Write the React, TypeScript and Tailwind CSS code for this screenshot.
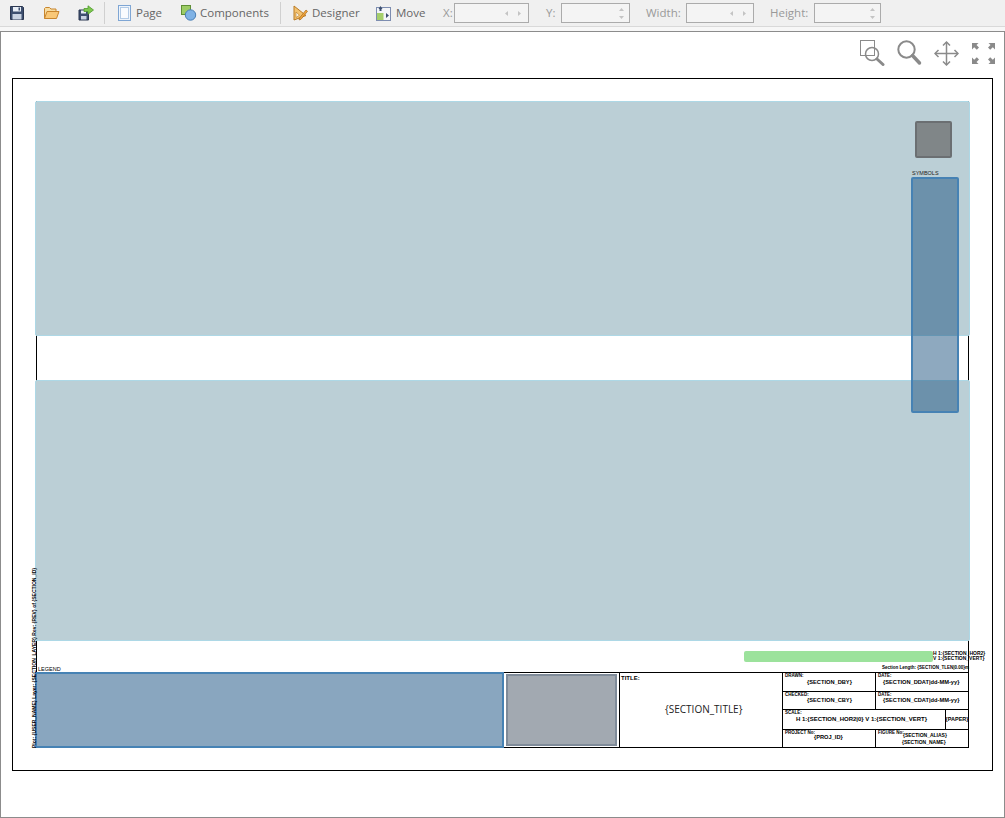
import React from 'react';

const uiFont = "font-['Open_Sans','Noto_Sans',sans-serif]";
const tinyFont = "font-['Liberation_Sans',sans-serif]";
const cornerPath = 'M1 1h6.500L5.500 3l2.500 2.500L5.800 7.800 3.200 5.200 1 7.500z';

function SaveIcon() {
  return (
    <svg width="16" height="16" viewBox="0 0 16 16">
      <path d="M1.500 1.500h12l1 1v12H1.500z" fill="#3d4f6f" stroke="#2a3650" />
      <rect x="4" y="2" width="8" height="4.500" fill="#e8eef6" />
      <rect x="9.500" y="2.500" width="1.500" height="3" fill="#3d4f6f" />
      <rect x="3.500" y="9" width="9" height="5.500" fill="#c9d3e2" />
    </svg>
  );
}

function OpenIcon() {
  return (
    <svg width="17" height="16" viewBox="0 0 17 16">
      <path d="M1.500 13.500v-10l1-1h4L8 4h5v2" fill="#f7dca0" stroke="#c8852e" />
      <path d="M1.500 13.500L4 6.500h12l-2.500 7z" fill="#f9c878" stroke="#c8852e" />
    </svg>
  );
}

function SaveAsIcon() {
  return (
    <svg width="16" height="16" viewBox="0 0 16 16">
      <path d="M1 5h8.500l1 1v9H1z" fill="#3d4f6f" stroke="#2a3650" />
      <rect x="3" y="5.500" width="5" height="3" fill="#e8eef6" />
      <rect x="3" y="11" width="5.500" height="3.500" fill="#c9d3e2" />
      <path d="M6 5V3.500h4V0.800L15.500 5 10 9.200V6.500H6z" fill="#7ec850" stroke="#4f9a2c" strokeWidth="0.800" />
    </svg>
  );
}

function PageIcon() {
  return (
    <svg width="14" height="16" viewBox="0 0 14 16">
      <rect x="0.500" y="0.500" width="12" height="15" fill="#eef4fb" stroke="#7fa6d4" />
      <rect x="2.500" y="2.500" width="8" height="11" fill="#f9fbfe" stroke="#b3cbe6" />
    </svg>
  );
}

function ComponentsIcon() {
  return (
    <svg width="16" height="16" viewBox="0 0 16 16">
      <rect x="0.500" y="0.500" width="9" height="9" fill="#9ccc65" stroke="#5f8f35" />
      <circle cx="9.500" cy="10" r="5.200" fill="#7fb2e5" stroke="#4a7fb5" />
    </svg>
  );
}

function DesignerIcon() {
  return (
    <svg width="15" height="16" viewBox="0 0 15 16">
      <path d="M1 1l12 9.500L1 15z" fill="#f3c26f" stroke="#b97a24" />
      <path d="M3 7l3.400 3.200L3 12.500z" fill="#f7f2e6" stroke="#b97a24" strokeWidth="0.600" />
      <path d="M6.500 13L13 5l1.500 1.300-6.500 8-2 .6z" fill="#f0a63c" stroke="#a9681b" strokeWidth="0.700" />
    </svg>
  );
}

function MoveIcon() {
  return (
    <svg width="15" height="16" viewBox="0 0 15 16">
      <rect x="0.500" y="2.500" width="14" height="13" fill="#f3f5f8" stroke="#7d8db0" />
      <rect x="1" y="8" width="6.500" height="7" fill="#a5cf6b" />
      <path d="M4.500 1l2 3h-4z" fill="#3d4f6f" />
      <path d="M10 8l3 2.500-3 2.500z" fill="#3d4f6f" />
      <rect x="3.500" y="4" width="2" height="2" fill="#3d4f6f" />
    </svg>
  );
}

function Sep({ className }: { className: string }) {
  return <div className={`h-[22px] w-px bg-[#d0d0d0] ${className}`} />;
}

function ToolButton({ icon, label, className, labelClass }: { icon: React.ReactNode; label: string; className: string; labelClass: string }) {
  return (
    <div className={`flex items-center ${className}`}>
      {icon}
      <span className={`whitespace-nowrap text-[11.5px] leading-none text-[#666] ${labelClass}`}>{label}</span>
    </div>
  );
}

function Arrows({ kind }: { kind: 'h' | 'v' }) {
  if (kind === 'h') {
    return (
      <div className="flex items-center gap-[10px] pr-[7px]">
        <svg width="3" height="5" viewBox="0 0 3 5"><path d="M3 0v5L0 2.500z" fill="#c4c4c4" /></svg>
        <svg width="3" height="5" viewBox="0 0 3 5"><path d="M0 0v5l3-2.500z" fill="#c4c4c4" /></svg>
      </div>
    );
  }
  return (
    <div className="flex flex-col items-center gap-[5px] pr-[5px]">
      <svg width="5" height="3" viewBox="0 0 5 3"><path d="M0 3h5L2.500 0z" fill="#c4c4c4" /></svg>
      <svg width="5" height="3" viewBox="0 0 5 3"><path d="M0 0h5L2.500 3z" fill="#c4c4c4" /></svg>
    </div>
  );
}

function Field({ label, kind, boxClass, labelClass }: { label: string; kind: 'h' | 'v'; boxClass: string; labelClass: string }) {
  return (
    <div className="flex items-center">
      <span className={`whitespace-nowrap text-[11.5px] leading-none text-[#999] ${labelClass}`}>{label}</span>
      <div className={`flex h-[20px] items-center justify-end border border-[#ababab] bg-[#f4f4f4] ${boxClass}`}>
        <Arrows kind={kind} />
      </div>
    </div>
  );
}

function Toolbar() {
  return (
    <div className={`flex h-[27px] shrink-0 items-center border-b border-[#d9d9d9] bg-[#f0f0f0] pl-[9px] ${uiFont}`}>
      <SaveIcon />
      <div className="ml-[18px]"><OpenIcon /></div>
      <div className="ml-[18px]"><SaveAsIcon /></div>
      <Sep className="ml-[10px]" />
      <ToolButton className="ml-[13px]" labelClass="ml-[4px] w-[26px]" icon={<PageIcon />} label="Page" />
      <ToolButton className="ml-[19px]" labelClass="ml-[3px] w-[69px]" icon={<ComponentsIcon />} label="Components" />
      <Sep className="ml-[11px]" />
      <ToolButton className="ml-[12px]" labelClass="ml-[4px] w-[46px]" icon={<DesignerIcon />} label="Designer" />
      <ToolButton className="ml-[18px]" labelClass="ml-[5px] w-[30px]" icon={<MoveIcon />} label="Move" />
      <Field label="X:" kind="h" boxClass="ml-[1px] w-[75px]" labelClass="ml-[17px] w-[10px]" />
      <Field label="Y:" kind="v" boxClass="ml-[5px] w-[69px]" labelClass="ml-[17px] w-[10px]" />
      <Field label="Width:" kind="h" boxClass="ml-[5px] w-[68px]" labelClass="ml-[16px] w-[35px]" />
      <Field label="Height:" kind="v" boxClass="ml-[6px] w-[67px]" labelClass="ml-[16px] w-[38px]" />
    </div>
  );
}

function ZoomTools() {
  return (
    <div className="absolute left-[859px] top-[8px] flex items-start gap-[12px]">
      <svg width="25" height="26" viewBox="0 0 25 26" fill="none" stroke="#8a8a8a">
        <rect x="0.500" y="0.500" width="14" height="15" strokeWidth="1" />
        <circle cx="12" cy="14" r="6.500" strokeWidth="1.500" fill="none" />
        <path d="M17 19l6 5.500" strokeWidth="3" strokeLinecap="round" />
      </svg>
      <svg width="25" height="26" viewBox="0 0 25 26" fill="none" stroke="#8a8a8a">
        <circle cx="9.500" cy="9.500" r="8.200" strokeWidth="2" />
        <path d="M15.500 15.500l7 7.500" strokeWidth="3.500" strokeLinecap="round" />
      </svg>
      <svg width="25" height="26" viewBox="0 0 25 26" fill="none" stroke="#8a8a8a" strokeWidth="1.500">
        <path d="M12.500 2v23M1 13.500h23" />
        <path d="M9 5.500l3.500-3.500L16 5.500M9 21.500l3.500 3.500 3.500-3.500M4.500 10L1 13.500 4.500 17M20.500 10l3.500 3.500-3.500 3.500" />
      </svg>
      <svg width="25" height="25" viewBox="0 0 25 25" fill="#8a8a8a" className="mt-[2px]">
        <path d={cornerPath} />
        <path d={cornerPath} transform="matrix(-1 0 0 1 25 0)" />
        <path d={cornerPath} transform="matrix(1 0 0 -1 0 23)" />
        <path d={cornerPath} transform="matrix(-1 0 0 -1 25 23)" />
      </svg>
    </div>
  );
}

function Cell({ label, value, valueClass, className }: { label: string; value: React.ReactNode; valueClass: string; className: string }) {
  return (
    <div className={`relative border-black ${className}`}>
      <span className="absolute left-[2px] top-[1px] whitespace-nowrap text-[4.500px] font-bold leading-none">{label}</span>
      <span className={`absolute whitespace-nowrap font-bold leading-none ${valueClass}`}>{value}</span>
    </div>
  );
}

function TitleBlock() {
  return (
    <div className={`absolute left-[490px] top-[593px] flex h-[76px] w-[466px] border border-black bg-white text-black ${tinyFont}`}>
      <div className="flex w-[116px] items-center justify-center border-r border-black pr-px">
        <div className="h-[72px] w-[111px] border-2 border-[#7f8b99] bg-[#a2a9b1]" />
      </div>
      <div className="relative w-[163px] border-r border-black">
        <span className="absolute left-[1px] top-[2px] text-[6px] font-bold leading-none">TITLE:</span>
        <span className={`absolute left-[45px] top-[31px] whitespace-nowrap text-[10px] leading-none text-[#222] ${uiFont}`}>{'{SECTION_TITLE}'}</span>
      </div>
      <div className="grid flex-1 grid-cols-[93px_70px_22px] grid-rows-[19px_18px_20px_17px]">
        <Cell className="border-r border-b" label="DRAWN:" value="{SECTION_DBY}" valueClass="left-[24px] top-[7px] text-[5.700px]" />
        <Cell className="col-span-2 border-b" label="DATE:" value="{SECTION_DDAT|dd-MM-yy}" valueClass="left-[7px] top-[7px] text-[5.700px]" />
        <Cell className="border-r border-b" label="CHECKED:" value="{SECTION_CBY}" valueClass="left-[24px] top-[6px] text-[5.700px]" />
        <Cell className="col-span-2 border-b" label="DATE:" value="{SECTION_CDAT|dd-MM-yy}" valueClass="left-[7px] top-[6px] text-[5.700px]" />
        <Cell className="col-span-2 border-r border-b" label="SCALE:" value="H 1:{SECTION_HOR2|0}  V 1:{SECTION_VERT}" valueClass="left-[13px] top-[6px] text-[6px]" />
        <div className="flex items-center justify-center border-b border-black text-[5.500px] font-bold leading-none">{'{PAPER}'}</div>
        <Cell className="border-r" label="PROJECT No:" value="{PROJ_ID}" valueClass="left-[31px] top-[5px] text-[5.700px]" />
        <div className="relative col-span-2">
          <span className="absolute left-[2px] top-[1px] whitespace-nowrap text-[4.500px] font-bold leading-none">FIGURE No:</span>
          <span className="absolute left-[27px] top-[3px] whitespace-nowrap text-[5px] font-bold leading-none">{'{SECTION_ALIAS}'}</span>
          <span className="absolute left-[26px] top-[10px] whitespace-nowrap text-[5px] font-bold leading-none">{'{SECTION_NAME}'}</span>
        </div>
      </div>
    </div>
  );
}

function PageSheet() {
  return (
    <div className={`absolute left-[11px] top-[46px] h-[693px] w-[981px] border border-black bg-white ${tinyFont}`}>
      {/* inner frame lines, visible only between the panels */}
      <div className="absolute left-[23px] top-[22px] h-[647px] w-[933px] border-x border-black" />

      <div className="absolute left-[22px] top-[22px] h-[235px] w-[935px] rounded-[2px] border border-[#add8e6] bg-[#bbcfd6]" />
      <div className="absolute left-[22px] top-[301px] h-[261px] w-[935px] rounded-[2px] border border-[#add8e6] bg-[#bbcfd6]" />

      <div className="absolute left-[902px] top-[42px] h-[37px] w-[37px] rounded-[2px] border-2 border-[#6b6f72] bg-[#808688]" />
      <span className="absolute left-[899px] top-[92px] text-[5.500px] leading-none text-[#222]">SYMBOLS</span>
      <div className="absolute left-[898px] top-[98px] h-[236px] w-[48px] rounded-[2px] border-2 border-[#4682b4] bg-[#1d537f]/50" />

      <div className="absolute left-[731px] top-[572px] h-[11px] w-[189px] rounded-[2px] bg-[#9ce29c]" />
      <div className="absolute left-[920px] top-[572px] whitespace-nowrap text-[5px] font-bold leading-[5px] text-black">
        <div>H 1:{'{SECTION_HOR2}'}</div>
        <div>V 1:{'{SECTION_VERT}'}</div>
      </div>
      <span className="absolute left-[869px] top-[587px] whitespace-nowrap text-[4.500px] font-bold leading-none text-black">
        Section Length: {'{SECTION_TLEN|0.00}'}m
      </span>

      <TitleBlock />

      <span className="absolute left-[25px] top-[588px] text-[5.500px] leading-none text-black">LEGEND</span>
      <div className="absolute left-[22px] top-[593px] h-[76px] w-[469px] border-2 border-[#4682b4] bg-[#89a6bf]" />

      <span className="absolute left-[20px] top-[669px] origin-top-left -rotate-90 whitespace-nowrap text-[5px] font-bold leading-[3px] text-black">
        Plot: {'{USER_NAME}'} Layer: {'{SECTION_LAYER}'} Rev: {'{REV}'} of {'{SECTION_ID}'}
      </span>
    </div>
  );
}

export default function App() {
  return (
    <div className="flex h-[818px] w-[1005px] flex-col overflow-hidden bg-white">
      <Toolbar />
      <div className="h-[4px] shrink-0 bg-[#f7f7f7]" />
      <div className="relative flex-1 border border-[#8c8c8c] bg-white">
        <ZoomTools />
        <PageSheet />
      </div>
    </div>
  );
}
